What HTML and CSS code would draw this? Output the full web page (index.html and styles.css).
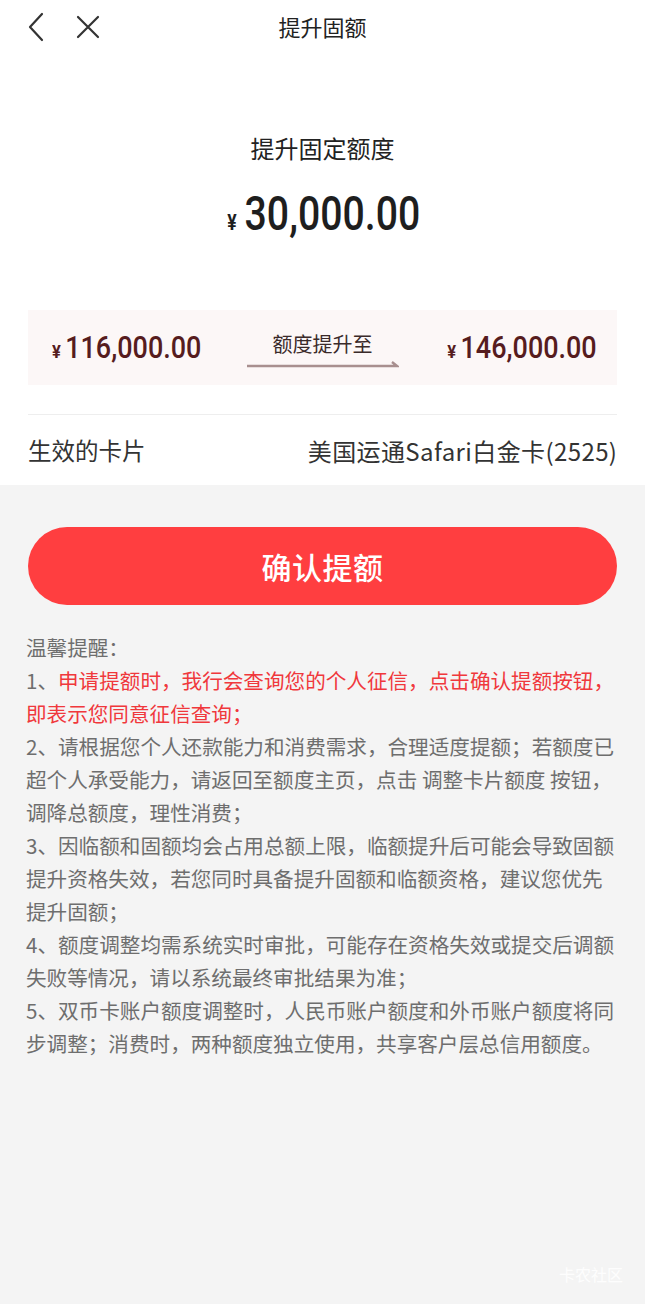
FILE: index.html
```html
<!DOCTYPE html>
<html lang="zh-CN">
<head>
<meta charset="utf-8">
<title>提升固额</title>
<link rel="stylesheet" href="styles.css">
</head>
<body>
<div class="page">
  <header class="nav">
    <div class="nav-icons">
      <svg class="nav-icon" width="22" height="30" viewBox="0 0 22 30"><path d="M16 2 L4 15 L16 28" fill="none" stroke="#333" stroke-width="2.2" stroke-linecap="round" stroke-linejoin="round"/></svg>
      <svg class="nav-icon" width="26" height="26" viewBox="0 0 26 26"><path d="M3 3 L23 23 M23 3 L3 23" fill="none" stroke="#333" stroke-width="2.2" stroke-linecap="round"/></svg>
    </div>
    <div class="nav-title">提升固额</div>
  </header>

  <section class="top">
    <div class="hero-title">提升固定额度</div>
    <div class="hero-amount"><span class="num big"><span class="yen">¥</span>30,000.00</span></div>

    <div class="compare">
      <div class="cmp-side left"><span class="num mid"><span class="yen-s">¥</span>116,000.00</span></div>
      <div class="cmp-mid">
        <span class="cmp-label">额度提升至</span>
        <svg class="cmp-arrow" width="152" height="8" viewBox="0 0 152 8"><path d="M0 6 H150 L145 2" fill="none" stroke="#a88f8f" stroke-width="2.4"/></svg>
      </div>
      <div class="cmp-side right"><span class="num mid r"><span class="yen-s">¥</span>146,000.00</span></div>
    </div>

    <div class="divider"></div>
    <div class="card-row">
      <span class="card-label">生效的卡片</span>
      <span class="card-value">美国运通Safari白金卡(2525)</span>
    </div>
  </section>

  <section class="bottom">
    <button class="confirm">确认提额</button>
    <div class="notes">
      <p>温馨提醒：</p>
      <p>1、<span class="red">申请提额时，我行会查询您的个人征信，点击确认提额按钮，<br>即表示您同意征信查询；</span></p>
      <p>2、请根据您个人还款能力和消费需求，合理适度提额；若额度已超个人承受能力，请返回至额度主页，点击 调整卡片额度 按钮，<br>调降总额度，理性消费；</p>
      <p>3、因临额和固额均会占用总额上限，临额提升后可能会导致固额提升资格失效，若您同时具备提升固额和临额资格，建议您优先提升固额；</p>
      <p>4、额度调整均需系统实时审批，可能存在资格失效或提交后调额失败等情况，请以系统最终审批结果为准；</p>
      <p>5、双币卡账户额度调整时，人民币账户额度和外币账户额度将同步调整；消费时，两种额度独立使用，共享客户层总信用额度。</p>
    </div>
    <div class="watermark">卡农社区</div>
  </section>
</div>
</body>
</html>
```

FILE: styles.css
```css
* { box-sizing: border-box; }
html, body { margin: 0; padding: 0; }
body {
  font-family: "Noto Sans CJK SC", "Noto Sans", sans-serif;
  background: #f4f4f4;
  color: #222;
}
.page {
  width: 645px;
  min-height: 1304px;
  display: flex;
  flex-direction: column;
  background: #f4f4f4;
}
.nav {
  height: 55px;
  position: relative;
  background: #fff;
  display: flex;
  align-items: center;
  justify-content: center;
}
.nav-icons {
  position: absolute;
  left: 26px;
  top: 12px;
  display: flex;
  align-items: center;
  gap: 27px;
}
.nav-title {
  font-size: 22px;
  line-height: 30px;
  color: #222;
  margin-top: -3px;
}
.top {
  background: #fff;
  padding: 78px 28px 0;
}
.hero-title {
  text-align: center;
  font-size: 24px;
  line-height: 30px;
  color: #222;
}
.hero-amount {
  margin-top: 25px;
  height: 60px;
  display: flex;
  justify-content: center;
  align-items: center;
}
.num {
  font-family: Roboto, "Liberation Sans", sans-serif;
  display: inline-block;
  white-space: nowrap;
}
.big {
  font-size: 49px;
  font-weight: 500;
  color: #1e1e1e;
  transform: scaleX(0.8);
  transform-origin: center;
  line-height: 60px;
  margin-left: 2px;
}
.yen {
  font-size: 22px;
  font-weight: 700;
  margin-right: 10px;
}
.compare {
  margin-top: 62px;
  height: 75px;
  background: #fcf7f7;
  display: flex;
  align-items: center;
  justify-content: space-between;
  padding: 0 20px 0 24px;
}
.cmp-side { width: 160px; display: flex; }
.cmp-side.right { justify-content: flex-end; }
.mid {
  font-size: 31px;
  font-weight: 500;
  color: #561c1e;
  transform: scaleX(0.87);
  transform-origin: left center;
}
.mid.r { transform-origin: right center; }
.yen-s {
  font-size: 19px;
  font-weight: 700;
  margin-right: 5px;
}
.cmp-mid {
  display: flex;
  flex-direction: column;
  align-items: center;
  padding-top: 2px;
  margin-left: -4px;
}
.cmp-label {
  font-size: 20px;
  line-height: 28px;
  color: #3a2a2a;
}
.cmp-arrow { display: block; margin-top: 2px; }
.divider {
  margin-top: 29px;
  height: 1px;
  background: #eeeeee;
}
.card-row {
  height: 70px;
  display: flex;
  align-items: center;
  justify-content: space-between;
  font-size: 23.5px;
  color: #333;
}
.card-value { font-size: 24px; letter-spacing: 0.4px; margin-right: -0.4px; }
.bottom {
  flex: 1;
  position: relative;
  padding: 42px 28px 40px;
}
.confirm {
  display: block;
  width: 100%;
  height: 78px;
  border: none;
  border-radius: 39px;
  background: #ff3e40;
  color: #fff;
  font-family: "Noto Sans CJK SC", sans-serif;
  font-size: 30px;
  font-weight: 500;
  letter-spacing: 0.5px;
}
.notes {
  margin: 26px -2px 0 -2px;
  font-size: 20.6px;
  line-height: 33px;
  color: #6e6e6e;
}
.notes p { margin: 0; }
.red { color: #f0383c; }
.watermark {
  position: absolute;
  right: 22px;
  bottom: 18px;
  font-size: 16px;
  color: rgba(255, 255, 255, 0.9);
}
```
